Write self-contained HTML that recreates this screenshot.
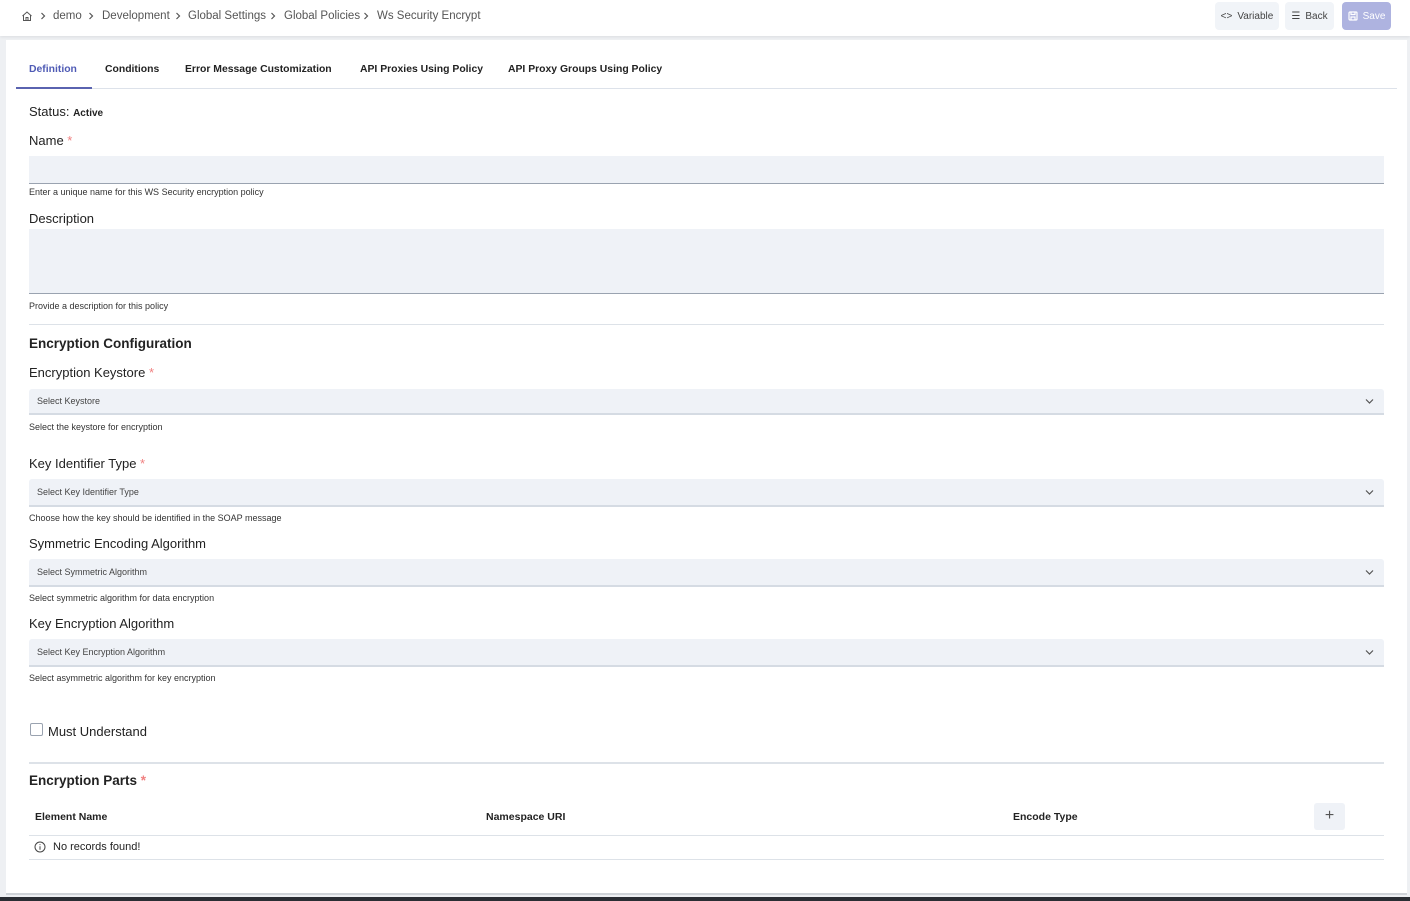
<!DOCTYPE html>
<html><head><meta charset="utf-8"><style>
*{box-sizing:border-box;margin:0;padding:0}
body{width:1410px;height:901px;background:#eef0f3;font-family:"Liberation Sans",sans-serif;color:#1f2937;position:relative;overflow:hidden}
.a{position:absolute;white-space:nowrap}
.top{position:absolute;left:0;top:0;width:1410px;height:36px;background:#fff;box-shadow:0 1px 3px rgba(0,0,0,.08)}
.bc{font-size:11.5px;color:#555;top:10px}
.sep{top:12px}
.btn{position:absolute;top:2px;height:28px;border-radius:4px;background:#f1f4f8;font-size:10px;color:#444;display:flex;align-items:center;justify-content:center;gap:5px}
.card{position:absolute;left:6px;top:40px;width:1401px;height:855px;background:#fff;border-bottom:2px solid #cfd3d8}
.tab{top:64px;font-size:10.4px;font-weight:bold;color:#222}
.lbl{font-size:13px;color:#222}
.req{color:#f08080}
.help{font-size:9px;color:#333}
.inp{position:absolute;left:29px;width:1355px;background:#eff2f7;border-bottom:1.5px solid #9aa3b0}
.sel{position:absolute;left:29px;width:1355px;background:#eff2f7;border-bottom:2px solid #d5dbe3;border-radius:3px 3px 0 0;font-size:9px;color:#444;padding-left:8px;display:flex;align-items:center}
.sel svg{position:absolute;right:10px;top:50%;margin-top:-4px}
.hr{position:absolute;left:29px;width:1355px;height:1px;background:#dde2e8}
.h{font-size:13.5px;font-weight:bold;color:#222}
.th{font-size:10.5px;font-weight:bold;color:#222;top:811px}
</style></head><body>
<div class="top"></div>
<svg class="a" style="left:21px;top:10px" width="12" height="12" viewBox="0 0 12 12" fill="none" stroke="#555" stroke-width="1"><path d="M1.5 6 6 2l4.5 4M2.5 5v5.5h7V5M5 10.5V7.5h2v3"/></svg>
<svg class="a sep" style="left:40px" width="6" height="8" viewBox="0 0 6 8"><path d="M1.5 1l3 3-3 3" fill="none" stroke="#555" stroke-width="1.2"/></svg>
<span class="a bc" style="left:53px">demo</span>
<svg class="a sep" style="left:88px" width="6" height="8" viewBox="0 0 6 8"><path d="M1.5 1l3 3-3 3" fill="none" stroke="#555" stroke-width="1.2"/></svg>
<span class="a bc" style="left:102px">Development</span>
<svg class="a sep" style="left:175px" width="6" height="8" viewBox="0 0 6 8"><path d="M1.5 1l3 3-3 3" fill="none" stroke="#555" stroke-width="1.2"/></svg>
<span class="a bc" style="left:188px">Global Settings</span>
<svg class="a sep" style="left:270px" width="6" height="8" viewBox="0 0 6 8"><path d="M1.5 1l3 3-3 3" fill="none" stroke="#555" stroke-width="1.2"/></svg>
<span class="a bc" style="left:284px">Global Policies</span>
<svg class="a sep" style="left:363px" width="6" height="8" viewBox="0 0 6 8"><path d="M1.5 1l3 3-3 3" fill="none" stroke="#555" stroke-width="1.2"/></svg>
<span class="a bc" style="left:377px">Ws Security Encrypt</span>
<div class="btn" style="left:1215px;width:64px"><span style="font-size:10px">&lt;&gt;</span>Variable</div>
<div class="btn" style="left:1285px;width:49px"><span>☰</span>Back</div>
<div class="btn" style="left:1342px;width:49px;background:#aeb3e0;color:#fff"><svg width="10" height="10" viewBox="0 0 10 10" fill="none" stroke="#fff" stroke-width="1.2"><rect x="1" y="1" width="8" height="8" rx="1"/><path d="M3 1v2.5h4V1M3 9V6h4v3"/></svg>Save</div>

<div class="card"></div>
<div class="a" style="left:16px;top:88px;width:1381px;height:1px;background:#dde2ea"></div>
<div class="a" style="left:16px;top:87px;width:76px;height:2px;background:#5a63b0"></div>
<span class="a tab" style="left:29px;color:#4f5bb5">Definition</span>
<span class="a tab" style="left:105px">Conditions</span>
<span class="a tab" style="left:185px">Error Message Customization</span>
<span class="a tab" style="left:360px">API Proxies Using Policy</span>
<span class="a tab" style="left:508px">API Proxy Groups Using Policy</span>

<span class="a lbl" style="left:29px;top:104px">Status: <b style="font-size:10px">Active</b></span>
<span class="a lbl" style="left:29px;top:133px">Name <span class="req">*</span></span>
<div class="inp" style="top:156px;height:28px"></div>
<span class="a help" style="left:29px;top:187px">Enter a unique name for this WS Security encryption policy</span>
<span class="a lbl" style="left:29px;top:211px">Description</span>
<div class="inp" style="top:229px;height:65px"></div>
<span class="a help" style="left:29px;top:301px">Provide a description for this policy</span>
<div class="hr" style="top:324px"></div>
<span class="a h" style="left:29px;top:336px">Encryption Configuration</span>

<span class="a lbl" style="left:29px;top:365px">Encryption Keystore <span class="req">*</span></span>
<div class="sel" style="top:389px;height:26px">Select Keystore<svg width="9" height="8" viewBox="0 0 9 8"><path d="M1 2.5l3.5 3.5L8 2.5" fill="none" stroke="#555" stroke-width="1.2"/></svg></div>
<span class="a help" style="left:29px;top:422px">Select the keystore for encryption</span>

<span class="a lbl" style="left:29px;top:456px">Key Identifier Type <span class="req">*</span></span>
<div class="sel" style="top:479px;height:28px">Select Key Identifier Type<svg width="9" height="8" viewBox="0 0 9 8"><path d="M1 2.5l3.5 3.5L8 2.5" fill="none" stroke="#555" stroke-width="1.2"/></svg></div>
<span class="a help" style="left:29px;top:513px">Choose how the key should be identified in the SOAP message</span>

<span class="a lbl" style="left:29px;top:536px">Symmetric Encoding Algorithm</span>
<div class="sel" style="top:559px;height:28px">Select Symmetric Algorithm<svg width="9" height="8" viewBox="0 0 9 8"><path d="M1 2.5l3.5 3.5L8 2.5" fill="none" stroke="#555" stroke-width="1.2"/></svg></div>
<span class="a help" style="left:29px;top:593px">Select symmetric algorithm for data encryption</span>

<span class="a lbl" style="left:29px;top:616px">Key Encryption Algorithm</span>
<div class="sel" style="top:639px;height:28px">Select Key Encryption Algorithm<svg width="9" height="8" viewBox="0 0 9 8"><path d="M1 2.5l3.5 3.5L8 2.5" fill="none" stroke="#555" stroke-width="1.2"/></svg></div>
<span class="a help" style="left:29px;top:673px">Select asymmetric algorithm for key encryption</span>

<div class="a" style="left:30px;top:723px;width:13px;height:13px;border:1.5px solid #9aa3b0;border-radius:2px;background:#fff"></div>
<span class="a lbl" style="left:48px;top:724px">Must Understand</span>
<div class="hr" style="top:762px;height:1.5px"></div>
<span class="a h" style="left:29px;top:773px">Encryption Parts <span class="req">*</span></span>

<span class="a th" style="left:35px">Element Name</span>
<span class="a th" style="left:486px">Namespace URI</span>
<span class="a th" style="left:1013px">Encode Type</span>
<div class="a" style="left:1314px;top:803px;width:31px;height:27px;background:#eff2f7;border-radius:3px;text-align:center;font-size:16px;line-height:26px;color:#555">+</div>
<div class="hr" style="top:835px"></div>
<svg class="a" style="left:34px;top:841px" width="12" height="12" viewBox="0 0 12 12" fill="none" stroke="#444" stroke-width="1"><circle cx="6" cy="6" r="5"/><path d="M6 5.2v3.5M6 3.3v.8"/></svg>
<span class="a" style="left:53px;top:841px;font-size:11px;color:#222">No records found!</span>
<div class="hr" style="top:859px"></div>
<div class="a" style="left:0;top:897px;width:1410px;height:4px;background:#2a2d33"></div>
</body></html>
